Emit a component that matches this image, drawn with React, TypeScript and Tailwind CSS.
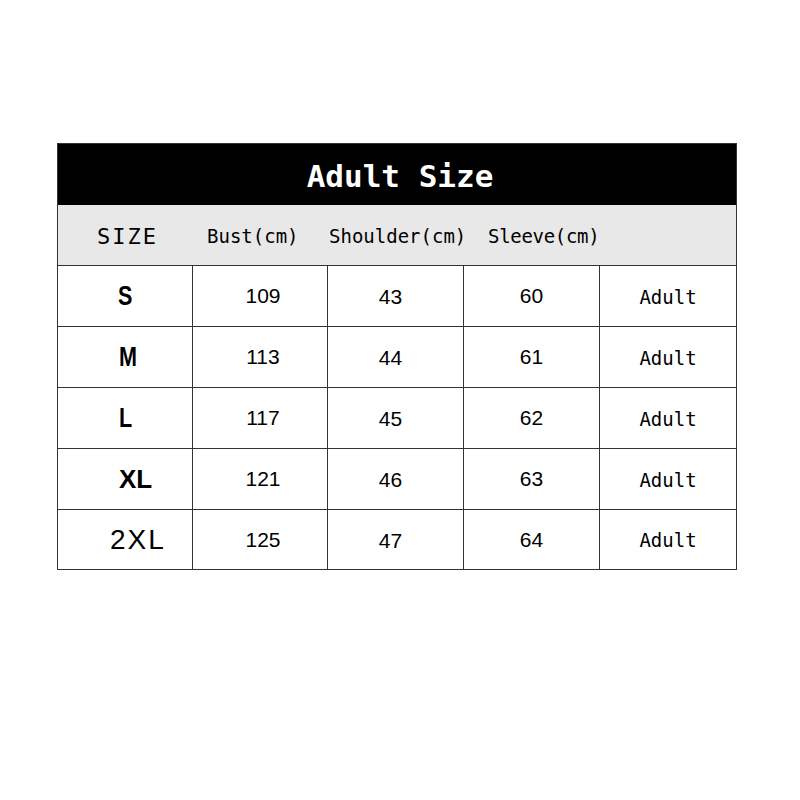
const rows = [
  { size: "S", sizeCls: "pl-[60px] font-bold text-[27px]", bust: "109", shoulder: "43", sleeve: "60" },
  { size: "M", sizeCls: "pl-[61px] font-bold text-[27px]", bust: "113", shoulder: "44", sleeve: "61" },
  { size: "L", sizeCls: "pl-[61px] font-bold text-[27px]", bust: "117", shoulder: "45", sleeve: "62" },
  { size: "XL", sizeCls: "pl-[61px] font-bold text-[26px]", bust: "121", shoulder: "46", sleeve: "63" },
  { size: "2XL", sizeCls: "pl-[52px] text-[28px] tracking-[2px]", bust: "125", shoulder: "47", sleeve: "64" },
];

const mono = "[font-family:'DejaVu_Sans_Mono','Liberation_Mono',monospace]";
const sans = "[font-family:'Liberation_Sans',Arial,sans-serif]";

export default function App() {
  return (
    <div className="w-[800px] h-[800px] bg-white pt-[143px] pl-[57px]">
      <div className="w-[680px] border border-[#333] text-black">
        {/* Title */}
        <div className={`h-[61px] bg-black flex items-center justify-center pt-[4px] pl-[6px] text-white font-bold text-[31px] ${mono}`}>
          Adult Size
        </div>

        {/* Column headings */}
        <div className={`h-[60px] bg-[#e8e8e8] flex items-center pl-[39px] pt-[2px] text-[19px] ${mono}`}>
          <div className="w-[110px] text-[22px] tracking-[2px]">SIZE</div>
          <div className="w-[122px]">Bust(cm)</div>
          <div className="w-[159px]">Shoulder(cm)</div>
          <div className="tracking-[-0.3px]">Sleeve(cm)</div>
        </div>

        {/* Rows */}
        {rows.map((r, i) => (
          <div
            key={r.size}
            className={`grid grid-cols-[134px_135px_136px_136px_1fr] border-t border-[#333] ${i === rows.length - 1 ? "h-[60px]" : "h-[61px]"}`}
          >
            <div className={`flex items-center ${sans} ${r.sizeCls}`}>
              <span className={r.size.length === 1 ? "inline-block scale-x-[0.8] origin-left" : "inline-block"}>{r.size}</span>
            </div>
            <div className={`flex items-center justify-center pl-[6px] border-l border-[#333] text-[21px] ${sans}`}>{r.bust}</div>
            <div className={`flex items-center justify-center pr-[10px] pt-[2px] border-l border-[#333] text-[21px] ${sans}`}>{r.shoulder}</div>
            <div className={`flex items-center justify-center border-l border-[#333] text-[21px] ${sans}`}>{r.sleeve}</div>
            <div className={`flex items-center justify-center pt-[2px] border-l border-[#333] text-[19px] ${mono}`}>Adult</div>
          </div>
        ))}
      </div>
    </div>
  );
}
